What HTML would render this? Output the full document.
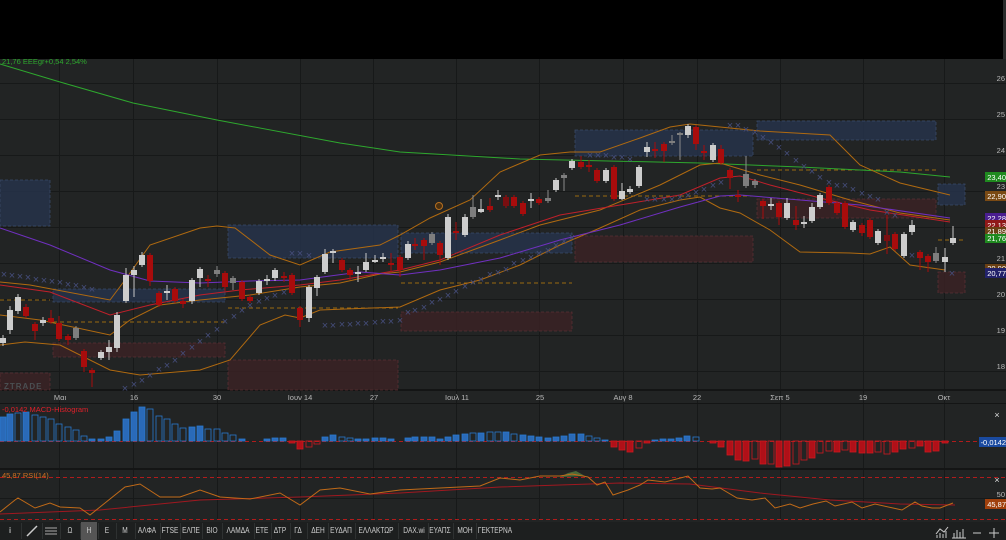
<!DOCTYPE html>
<html><head><meta charset="utf-8"><style>
body{margin:0;width:1006px;height:540px;overflow:hidden;background:#222424;font-family:"Liberation Sans",sans-serif}
svg{position:absolute;left:0;top:0}
.tb{position:absolute;top:522px;height:18px;left:0;width:1006px;background:#1d1f1f}
.tb span{position:absolute;top:4px;font-size:8px;color:#cfcfcf;transform:translateX(-50%) scaleX(.82);white-space:nowrap}
.tb i{position:absolute;top:1px;width:1px;height:16px;background:#2e3131}
</style></head><body>
<svg width="1006" height="540" viewBox="0 0 1006 540" font-family="Liberation Sans, sans-serif">
<rect x="0" y="0" width="1003" height="59" fill="#000"/>
<rect x="1003" y="0" width="3" height="59" fill="#2a2c2c"/>
<g stroke="#171919" stroke-width="1">
<line x1="0" y1="83.5" x2="1006" y2="83.5"/><line x1="0" y1="119.5" x2="1006" y2="119.5"/><line x1="0" y1="155.5" x2="1006" y2="155.5"/><line x1="0" y1="191.5" x2="1006" y2="191.5"/><line x1="0" y1="227.5" x2="1006" y2="227.5"/><line x1="0" y1="263.5" x2="1006" y2="263.5"/><line x1="0" y1="299.5" x2="1006" y2="299.5"/><line x1="0" y1="335.5" x2="1006" y2="335.5"/><line x1="0" y1="371.5" x2="1006" y2="371.5"/>
<line x1="59.5" y1="59" x2="59.5" y2="520"/><line x1="133.5" y1="59" x2="133.5" y2="520"/><line x1="217.5" y1="59" x2="217.5" y2="520"/><line x1="300.5" y1="59" x2="300.5" y2="520"/><line x1="373.5" y1="59" x2="373.5" y2="520"/><line x1="456.5" y1="59" x2="456.5" y2="520"/><line x1="539.5" y1="59" x2="539.5" y2="520"/><line x1="623.5" y1="59" x2="623.5" y2="520"/><line x1="697.5" y1="59" x2="697.5" y2="520"/><line x1="780.5" y1="59" x2="780.5" y2="520"/><line x1="863.5" y1="59" x2="863.5" y2="520"/><line x1="944.5" y1="59" x2="944.5" y2="520"/>
<line x1="0" y1="498.5" x2="1006" y2="498.5"/>
</g>
<rect x="0" y="389" width="1006" height="2" fill="#141515"/>
<rect x="0" y="403" width="1006" height="1" fill="#141515"/>
<rect x="0" y="468" width="1006" height="2" fill="#141515"/>
<g fill="#26324a" fill-opacity="0.85" stroke="#3a4a68" stroke-dasharray="3,2" stroke-width="0.8">
<rect x="0" y="180" width="50" height="46"/><rect x="53" y="289" width="172" height="13"/><rect x="228" y="225" width="170" height="33"/><rect x="401" y="233" width="171" height="20"/><rect x="575" y="130" width="178" height="26"/><rect x="757" y="121" width="179" height="19"/><rect x="938" y="184" width="27" height="21"/>
</g>
<g fill="#3a2224" fill-opacity="0.85" stroke="#5a3034" stroke-dasharray="3,2" stroke-width="0.8">
<rect x="0" y="373" width="50" height="17"/><rect x="53" y="343" width="172" height="14"/><rect x="228" y="360" width="170" height="30"/><rect x="401" y="312" width="171" height="19"/><rect x="575" y="236" width="178" height="26"/><rect x="757" y="199" width="179" height="19"/><rect x="938" y="272" width="27" height="21"/>
</g>
<g stroke="#9a6a10" stroke-dasharray="4,3" stroke-width="1">
<line x1="0" y1="300" x2="50" y2="300"/><line x1="53" y1="322" x2="225" y2="322"/><line x1="228" y1="308" x2="398" y2="308"/><line x1="401" y1="283" x2="572" y2="283"/><line x1="575" y1="196" x2="753" y2="196"/><line x1="757" y1="170" x2="936" y2="170"/><line x1="938" y1="240" x2="965" y2="240"/>
</g>
<text x="4" y="389" font-size="8" fill="#4a4f52" font-weight="bold" letter-spacing="1">ZTRADE</text>
<g fill="none" stroke-width="1">
<polyline stroke="#2ea82e" points="0,64 60,82 133,103 217,120 340,143 400,152 520,159 700,163 800,167 900,172 950,177"/>
<polyline stroke="#b06a10" points="0,282 30,285 110,300 125,280 150,245 200,228 217,226 235,228 270,255 300,265 330,252 380,245 400,235 430,218 470,200 500,172 540,155 570,152 600,152 640,138 670,127 690,124 720,127 760,131 830,135 860,165 900,183 950,195"/>
<polyline stroke="#b06a10" points="0,315 40,320 110,335 130,320 160,305 200,300 250,295 300,287 340,283 380,274 400,272 440,262 500,240 540,225 600,210 660,185 700,165 720,163 760,175 800,185 850,200 900,213 950,220"/>
<polyline stroke="#b06a10" points="0,345 25,342 60,345 110,370 140,375 200,370 230,360 260,325 285,315 300,318 320,310 400,307 440,290 480,280 520,265 560,245 600,228 640,210 680,200 700,197 720,208 740,213 770,230 800,252 850,253 870,254 890,247 910,265 945,270"/>
<polyline stroke="#c0202a" points="0,285 50,292 110,315 150,305 200,295 240,290 300,285 340,280 400,270 440,260 500,235 560,215 620,205 680,195 720,178 740,176 770,185 820,198 870,210 950,222"/>
<polyline stroke="#7030c0" points="0,228 50,245 110,270 150,281 200,283 250,281 300,280 330,276 360,272 400,275 440,270 500,258 560,240 620,225 680,207 720,196 740,195 800,200 860,205 950,218"/>
</g>
<g fill="#454d7a" font-size="11" text-anchor="middle">
<text x="4" y="278">×</text><text x="12" y="279">×</text><text x="20" y="280">×</text><text x="28" y="281">×</text><text x="36" y="283">×</text><text x="44" y="284">×</text><text x="52" y="285">×</text><text x="60" y="286">×</text><text x="68" y="288">×</text><text x="76" y="289">×</text><text x="84" y="291">×</text><text x="92" y="293">×</text>
<text x="125" y="392">×</text><text x="134" y="388">×</text><text x="142" y="384">×</text><text x="150" y="379">×</text><text x="159" y="373">×</text><text x="167" y="369">×</text><text x="175" y="364">×</text><text x="183" y="357">×</text><text x="192" y="351">×</text><text x="200" y="345">×</text><text x="208" y="339">×</text><text x="217" y="333">×</text><text x="225" y="325">×</text><text x="234" y="320">×</text><text x="242" y="314">×</text><text x="250" y="309">×</text><text x="259" y="305">×</text><text x="267" y="302">×</text><text x="275" y="299">×</text><text x="284" y="296">×</text>
<text x="292" y="257">×</text><text x="300" y="257">×</text><text x="309" y="259">×</text>
<text x="325" y="329">×</text><text x="333" y="329">×</text><text x="342" y="328">×</text><text x="350" y="328">×</text><text x="358" y="327">×</text><text x="366" y="327">×</text><text x="375" y="326">×</text><text x="383" y="325">×</text><text x="391" y="325">×</text><text x="400" y="324">×</text>
<text x="408" y="316">×</text><text x="415" y="314">×</text><text x="424" y="311">×</text><text x="432" y="306">×</text><text x="440" y="303">×</text><text x="448" y="299">×</text><text x="456" y="295">×</text><text x="465" y="290">×</text><text x="473" y="286">×</text><text x="481" y="283">×</text><text x="490" y="278">×</text><text x="498" y="276">×</text><text x="506" y="273">×</text><text x="514" y="267">×</text><text x="523" y="264">×</text><text x="531" y="261">×</text><text x="539" y="257">×</text><text x="548" y="254">×</text><text x="556" y="249">×</text><text x="564" y="245">×</text><text x="572" y="241">×</text>
<text x="590" y="159">×</text><text x="598" y="159">×</text><text x="606" y="159">×</text><text x="614" y="161">×</text><text x="622" y="161">×</text><text x="630" y="163">×</text>
<text x="647" y="203">×</text><text x="655" y="203">×</text><text x="664" y="203">×</text><text x="672" y="203">×</text><text x="680" y="201">×</text><text x="688" y="199">×</text><text x="696" y="196">×</text><text x="704" y="193">×</text><text x="713" y="189">×</text><text x="721" y="186">×</text>
<text x="730" y="129">×</text><text x="738" y="129">×</text><text x="746" y="133">×</text><text x="755" y="136">×</text><text x="763" y="141">×</text><text x="771" y="146">×</text><text x="779" y="151">×</text><text x="787" y="157">×</text><text x="796" y="164">×</text><text x="804" y="170">×</text><text x="812" y="175">×</text><text x="820" y="181">×</text><text x="829" y="186">×</text><text x="837" y="189">×</text><text x="845" y="189">×</text><text x="853" y="193">×</text><text x="862" y="197">×</text><text x="870" y="200">×</text><text x="878" y="203">×</text><text x="887" y="216">×</text><text x="895" y="219">×</text><text x="912" y="259">×</text><text x="952" y="277">×</text>
</g>
<g stroke-width="1">
<g stroke="#c8c8c8">
<line x1="3" y1="335" x2="3" y2="346"/><line x1="10" y1="306" x2="10" y2="334"/><line x1="18" y1="294" x2="18" y2="314"/><line x1="43" y1="317" x2="43" y2="326"/><line x1="101" y1="350" x2="101" y2="360"/><line x1="109" y1="340" x2="109" y2="360"/><line x1="117" y1="312" x2="117" y2="352"/><line x1="126" y1="268" x2="126" y2="303"/><line x1="134" y1="266" x2="134" y2="297"/><line x1="142" y1="252" x2="142" y2="267"/><line x1="167" y1="285" x2="167" y2="300"/><line x1="192" y1="278" x2="192" y2="304"/><line x1="200" y1="267" x2="200" y2="287"/><line x1="259" y1="279" x2="259" y2="295"/><line x1="267" y1="275" x2="267" y2="285"/><line x1="275" y1="268" x2="275" y2="281"/><line x1="309" y1="285" x2="309" y2="322"/><line x1="317" y1="275" x2="317" y2="296"/><line x1="325" y1="249" x2="325" y2="274"/><line x1="333" y1="249" x2="333" y2="263"/><line x1="358" y1="266" x2="358" y2="282"/><line x1="366" y1="253" x2="366" y2="272"/><line x1="375" y1="255" x2="375" y2="263"/><line x1="383" y1="253" x2="383" y2="262"/><line x1="408" y1="241" x2="408" y2="260"/><line x1="448" y1="214" x2="448" y2="260"/><line x1="465" y1="214" x2="465" y2="237"/><line x1="481" y1="199" x2="481" y2="213"/><line x1="498" y1="190" x2="498" y2="200"/><line x1="531" y1="193" x2="531" y2="208"/><line x1="556" y1="178" x2="556" y2="192"/><line x1="572" y1="159" x2="572" y2="170"/><line x1="606" y1="168" x2="606" y2="183"/><line x1="622" y1="183" x2="622" y2="200"/><line x1="630" y1="186" x2="630" y2="194"/><line x1="639" y1="165" x2="639" y2="188"/><line x1="647" y1="142" x2="647" y2="157"/><line x1="688" y1="124" x2="688" y2="138"/><line x1="713" y1="143" x2="713" y2="162"/><line x1="771" y1="198" x2="771" y2="210"/><line x1="787" y1="198" x2="787" y2="220"/><line x1="804" y1="216" x2="804" y2="228"/><line x1="812" y1="203" x2="812" y2="223"/><line x1="820" y1="193" x2="820" y2="209"/><line x1="853" y1="220" x2="853" y2="232"/><line x1="878" y1="229" x2="878" y2="245"/><line x1="904" y1="232" x2="904" y2="258"/><line x1="912" y1="220" x2="912" y2="235"/><line x1="945" y1="248" x2="945" y2="272"/><line x1="953" y1="226" x2="953" y2="245"/>
</g>
<g stroke="#8a8a8a">
<line x1="76" y1="326" x2="76" y2="340"/><line x1="217" y1="266" x2="217" y2="277"/><line x1="233" y1="276" x2="233" y2="290"/><line x1="432" y1="232" x2="432" y2="245"/><line x1="473" y1="195" x2="473" y2="219"/><line x1="548" y1="190" x2="548" y2="203"/><line x1="564" y1="173" x2="564" y2="191"/><line x1="672" y1="135" x2="672" y2="145"/><line x1="680" y1="132" x2="680" y2="160"/><line x1="746" y1="156" x2="746" y2="188"/><line x1="755" y1="179" x2="755" y2="188"/><line x1="936" y1="247" x2="936" y2="263"/>
</g>
<g stroke="#a80c0c">
<line x1="26" y1="304" x2="26" y2="318"/><line x1="35" y1="322" x2="35" y2="340"/><line x1="51" y1="310" x2="51" y2="324"/><line x1="59" y1="316" x2="59" y2="341"/><line x1="68" y1="334" x2="68" y2="345"/><line x1="84" y1="349" x2="84" y2="372"/><line x1="92" y1="368" x2="92" y2="387"/><line x1="150" y1="253" x2="150" y2="286"/><line x1="159" y1="291" x2="159" y2="307"/><line x1="175" y1="287" x2="175" y2="303"/><line x1="183" y1="299" x2="183" y2="308"/><line x1="208" y1="275" x2="208" y2="287"/><line x1="225" y1="271" x2="225" y2="291"/><line x1="242" y1="280" x2="242" y2="301"/><line x1="250" y1="295" x2="250" y2="303"/><line x1="284" y1="272" x2="284" y2="282"/><line x1="292" y1="273" x2="292" y2="295"/><line x1="300" y1="306" x2="300" y2="327"/><line x1="342" y1="258" x2="342" y2="272"/><line x1="350" y1="268" x2="350" y2="280"/><line x1="391" y1="253" x2="391" y2="272"/><line x1="400" y1="255" x2="400" y2="277"/><line x1="415" y1="238" x2="415" y2="250"/><line x1="424" y1="238" x2="424" y2="260"/><line x1="440" y1="241" x2="440" y2="265"/><line x1="456" y1="222" x2="456" y2="240"/><line x1="490" y1="198" x2="490" y2="212"/><line x1="506" y1="195" x2="506" y2="208"/><line x1="514" y1="195" x2="514" y2="208"/><line x1="523" y1="201" x2="523" y2="216"/><line x1="539" y1="197" x2="539" y2="205"/><line x1="581" y1="156" x2="581" y2="169"/><line x1="589" y1="160" x2="589" y2="172"/><line x1="597" y1="168" x2="597" y2="183"/><line x1="614" y1="165" x2="614" y2="201"/><line x1="655" y1="142" x2="655" y2="158"/><line x1="664" y1="142" x2="664" y2="162"/><line x1="696" y1="125" x2="696" y2="150"/><line x1="704" y1="145" x2="704" y2="160"/><line x1="721" y1="145" x2="721" y2="165"/><line x1="730" y1="168" x2="730" y2="189"/><line x1="738" y1="190" x2="738" y2="202"/><line x1="763" y1="199" x2="763" y2="219"/><line x1="779" y1="201" x2="779" y2="225"/><line x1="796" y1="206" x2="796" y2="230"/><line x1="829" y1="185" x2="829" y2="205"/><line x1="837" y1="201" x2="837" y2="215"/><line x1="845" y1="201" x2="845" y2="229"/><line x1="862" y1="223" x2="862" y2="236"/><line x1="870" y1="218" x2="870" y2="239"/><line x1="887" y1="215" x2="887" y2="254"/><line x1="895" y1="232" x2="895" y2="251"/><line x1="920" y1="250" x2="920" y2="270"/><line x1="928" y1="254" x2="928" y2="272"/>
</g>
</g>
<g fill="#cdcdcd">
<rect x="0" y="338" width="6" height="5"/><rect x="7" y="310" width="6" height="20"/><rect x="15" y="297" width="6" height="14"/><rect x="40" y="320" width="6" height="3"/><rect x="98" y="352" width="6" height="6"/><rect x="106" y="347" width="6" height="5"/><rect x="114" y="315" width="6" height="33"/><rect x="123" y="275" width="6" height="26"/><rect x="131" y="270" width="6" height="5"/><rect x="139" y="255" width="6" height="10"/><rect x="164" y="291" width="6" height="2"/><rect x="189" y="280" width="6" height="21"/><rect x="197" y="269" width="6" height="9"/><rect x="256" y="281" width="6" height="12"/><rect x="264" y="279" width="6" height="2"/><rect x="272" y="270" width="6" height="8"/><rect x="306" y="287" width="6" height="31"/><rect x="314" y="277" width="6" height="11"/><rect x="322" y="254" width="6" height="18"/><rect x="330" y="251" width="6" height="2"/><rect x="355" y="272" width="6" height="2"/><rect x="363" y="262" width="6" height="8"/><rect x="372" y="260" width="6" height="2"/><rect x="380" y="257" width="6" height="2"/><rect x="405" y="244" width="6" height="14"/><rect x="445" y="217" width="6" height="41"/><rect x="462" y="217" width="6" height="18"/><rect x="478" y="209" width="6" height="3"/><rect x="495" y="195" width="6" height="2"/><rect x="528" y="199" width="6" height="2"/><rect x="553" y="180" width="6" height="10"/><rect x="569" y="161" width="6" height="7"/><rect x="603" y="170" width="6" height="11"/><rect x="619" y="191" width="6" height="8"/><rect x="627" y="189" width="6" height="3"/><rect x="636" y="167" width="6" height="19"/><rect x="644" y="147" width="6" height="5"/><rect x="685" y="126" width="6" height="9"/><rect x="710" y="145" width="6" height="15"/><rect x="768" y="204" width="6" height="2"/><rect x="784" y="203" width="6" height="15"/><rect x="801" y="222" width="6" height="2"/><rect x="809" y="207" width="6" height="14"/><rect x="817" y="195" width="6" height="12"/><rect x="850" y="222" width="6" height="8"/><rect x="875" y="231" width="6" height="12"/><rect x="901" y="234" width="6" height="22"/><rect x="909" y="225" width="6" height="7"/><rect x="942" y="257" width="6" height="5"/><rect x="950" y="238" width="6" height="5"/>
</g>
<g fill="#7e7e7e">
<rect x="73" y="328" width="6" height="10"/><rect x="214" y="270" width="6" height="4"/><rect x="230" y="278" width="6" height="5"/><rect x="429" y="234" width="6" height="9"/><rect x="470" y="207" width="6" height="10"/><rect x="545" y="198" width="6" height="3"/><rect x="561" y="175" width="6" height="3"/><rect x="669" y="141" width="6" height="2"/><rect x="677" y="133" width="6" height="2"/><rect x="743" y="174" width="6" height="12"/><rect x="752" y="181" width="6" height="4"/><rect x="933" y="253" width="6" height="8"/>
</g>
<g fill="#a80c0c">
<rect x="23" y="307" width="6" height="9"/><rect x="32" y="324" width="6" height="7"/><rect x="48" y="318" width="6" height="4"/><rect x="56" y="323" width="6" height="16"/><rect x="65" y="336" width="6" height="4"/><rect x="81" y="351" width="6" height="16"/><rect x="89" y="370" width="6" height="3"/><rect x="147" y="255" width="6" height="26"/><rect x="156" y="293" width="6" height="12"/><rect x="172" y="289" width="6" height="12"/><rect x="180" y="301" width="6" height="3"/><rect x="205" y="279" width="6" height="2"/><rect x="222" y="273" width="6" height="14"/><rect x="239" y="282" width="6" height="17"/><rect x="247" y="297" width="6" height="4"/><rect x="281" y="276" width="6" height="2"/><rect x="289" y="275" width="6" height="18"/><rect x="297" y="308" width="6" height="12"/><rect x="339" y="260" width="6" height="10"/><rect x="347" y="270" width="6" height="5"/><rect x="388" y="263" width="6" height="2"/><rect x="397" y="257" width="6" height="13"/><rect x="412" y="244" width="6" height="2"/><rect x="421" y="240" width="6" height="6"/><rect x="437" y="243" width="6" height="12"/><rect x="453" y="231" width="6" height="2"/><rect x="487" y="206" width="6" height="4"/><rect x="503" y="197" width="6" height="9" fill="#7a0e10"/><rect x="511" y="197" width="6" height="9"/><rect x="520" y="203" width="6" height="11"/><rect x="536" y="199" width="6" height="4"/><rect x="578" y="162" width="6" height="5"/><rect x="586" y="165" width="6" height="2"/><rect x="594" y="170" width="6" height="11"/><rect x="611" y="167" width="6" height="32"/><rect x="652" y="149" width="6" height="2"/><rect x="661" y="144" width="6" height="7"/><rect x="693" y="127" width="6" height="17"/><rect x="701" y="151" width="6" height="2"/><rect x="718" y="149" width="6" height="14"/><rect x="727" y="170" width="6" height="8"/><rect x="735" y="195" width="6" height="2"/><rect x="760" y="201" width="6" height="5"/><rect x="776" y="203" width="6" height="14"/><rect x="793" y="220" width="6" height="5"/><rect x="826" y="187" width="6" height="16"/><rect x="834" y="203" width="6" height="10"/><rect x="842" y="203" width="6" height="24"/><rect x="859" y="225" width="6" height="8"/><rect x="867" y="220" width="6" height="17"/><rect x="884" y="235" width="6" height="6" fill="#7a0e10"/><rect x="892" y="234" width="6" height="15"/><rect x="917" y="252" width="6" height="6"/><rect x="925" y="256" width="6" height="6"/>
</g>
<circle cx="439" cy="206" r="3.5" fill="#4a3010" stroke="#b87020" stroke-width="1"/>
<text x="2" y="64" font-size="7.5" fill="#2ea82e">21,76 ΕΕΕgr+0,54 2,54%</text>
<g font-size="7.5" fill="#b8b8b8" text-anchor="end">
<text x="1005" y="81">26</text><text x="1005" y="117">25</text><text x="1005" y="153">24</text><text x="1005" y="189">23</text><text x="1005" y="261">21</text><text x="1005" y="297">20</text><text x="1005" y="333">19</text><text x="1005" y="369">18</text>
</g>
<g font-size="7.5" fill="#fff" text-anchor="end">
<rect x="985" y="172" width="21" height="10" fill="#1f8a1f"/><text x="1006" y="180">23,40</text>
<rect x="985" y="191" width="21" height="10" fill="#7a4a14"/><text x="1006" y="199">22,90</text>
<rect x="985" y="213" width="21" height="9" fill="#4a1e90"/><text x="1006" y="221">22,28</text>
<rect x="985" y="220" width="21" height="9" fill="#901818"/><text x="1006" y="228">22,13</text>
<rect x="985" y="227" width="21" height="8" fill="#6a4014"/><text x="1006" y="234">21,89</text>
<rect x="985" y="234" width="21" height="9" fill="#1f8a1f"/><text x="1006" y="241">21,76</text>
<rect x="985" y="264" width="21" height="8" fill="#6a4014"/><text x="1006" y="271">20,90</text>
<rect x="985" y="268" width="21" height="10" fill="#22226a"/><text x="1006" y="276">20,77</text>
</g>
<g font-size="7.5" fill="#b8b8b8" text-anchor="middle">
<text x="60" y="400">Μαι</text><text x="134" y="400">16</text><text x="217" y="400">30</text><text x="300" y="400">Ιουν 14</text><text x="374" y="400">27</text><text x="457" y="400">Ιουλ 11</text><text x="540" y="400">25</text><text x="623" y="400">Αυγ 8</text><text x="697" y="400">22</text><text x="780" y="400">Σεπ 5</text><text x="863" y="400">19</text><text x="944" y="400">Οκτ</text>
</g>
<line x1="0" y1="441.5" x2="1006" y2="441.5" stroke="#b01c1c" stroke-dasharray="4,3"/>
<g fill="#2a6ab8" stroke="#2a78d0" stroke-width="0.8">
<rect x="0" y="417" width="6" height="24"/><rect x="7" y="414" width="6" height="27"/><rect x="15" y="413" width="6" height="28" fill="none"/><rect x="23" y="412" width="6" height="29"/><rect x="32" y="415" width="6" height="26" fill="none"/><rect x="40" y="417" width="6" height="24" fill="none"/><rect x="48" y="419" width="6" height="22" fill="none"/><rect x="56" y="424" width="6" height="17" fill="none"/><rect x="65" y="427" width="6" height="14" fill="none"/><rect x="73" y="430" width="6" height="11" fill="none"/><rect x="81" y="436" width="6" height="5" fill="none"/><rect x="89" y="439" width="6" height="2"/><rect x="98" y="439" width="6" height="2"/><rect x="106" y="437" width="6" height="4"/><rect x="114" y="431" width="6" height="10"/><rect x="123" y="419" width="6" height="22"/><rect x="131" y="412" width="6" height="29"/><rect x="139" y="407" width="6" height="34"/><rect x="147" y="409" width="6" height="32" fill="none"/><rect x="156" y="416" width="6" height="25" fill="none"/><rect x="164" y="419" width="6" height="22" fill="none"/><rect x="172" y="424" width="6" height="17" fill="none"/><rect x="180" y="428" width="6" height="13" fill="none"/><rect x="189" y="427" width="6" height="14"/><rect x="197" y="426" width="6" height="15"/><rect x="205" y="429" width="6" height="12" fill="none"/><rect x="214" y="429" width="6" height="12" fill="none"/><rect x="222" y="433" width="6" height="8" fill="none"/><rect x="230" y="435" width="6" height="6" fill="none"/><rect x="239" y="439" width="6" height="2"/><rect x="264" y="439" width="6" height="2"/><rect x="272" y="438" width="6" height="3"/><rect x="280" y="438" width="6" height="3"/><rect x="322" y="437" width="6" height="4"/><rect x="330" y="435" width="6" height="6"/><rect x="339" y="437" width="6" height="4" fill="none"/><rect x="347" y="438" width="6" height="3" fill="none"/><rect x="355" y="439" width="6" height="2"/><rect x="363" y="439" width="6" height="2"/><rect x="372" y="438" width="6" height="3"/><rect x="380" y="438" width="6" height="3"/><rect x="388" y="439" width="6" height="2"/><rect x="405" y="438" width="6" height="3"/><rect x="412" y="437" width="6" height="4"/><rect x="421" y="437" width="6" height="4"/><rect x="429" y="437" width="6" height="4"/><rect x="437" y="439" width="6" height="2"/><rect x="445" y="437" width="6" height="4"/><rect x="453" y="435" width="6" height="6"/><rect x="462" y="434" width="6" height="7"/><rect x="470" y="433" width="6" height="8" fill="none"/><rect x="478" y="433" width="6" height="8"/><rect x="487" y="432" width="6" height="9" fill="none"/><rect x="495" y="432" width="6" height="9" fill="none"/><rect x="503" y="432" width="6" height="9"/><rect x="511" y="434" width="6" height="7" fill="none"/><rect x="520" y="435" width="6" height="6"/><rect x="528" y="436" width="6" height="5"/><rect x="536" y="437" width="6" height="4"/><rect x="545" y="438" width="6" height="3"/><rect x="553" y="437" width="6" height="4"/><rect x="561" y="436" width="6" height="5"/><rect x="569" y="434" width="6" height="7"/><rect x="578" y="434" width="6" height="7"/><rect x="586" y="436" width="6" height="5" fill="none"/><rect x="594" y="438" width="6" height="3" fill="none"/><rect x="602" y="440" width="6" height="1"/><rect x="652" y="440" width="6" height="1"/><rect x="660" y="439" width="6" height="2"/><rect x="668" y="439" width="6" height="2"/><rect x="676" y="438" width="6" height="3"/><rect x="684" y="436" width="6" height="5"/><rect x="693" y="437" width="6" height="4" fill="none"/>
</g>
<g fill="#b01018" stroke="#d01820" stroke-width="0.8">
<rect x="289" y="441" width="6" height="2"/><rect x="297" y="441" width="6" height="8"/><rect x="306" y="441" width="6" height="6" fill="none"/><rect x="314" y="441" width="6" height="3" fill="none"/>
<rect x="611" y="441" width="6" height="6"/><rect x="619" y="441" width="6" height="9"/><rect x="627" y="441" width="6" height="11"/><rect x="636" y="441" width="6" height="7" fill="none"/><rect x="644" y="441" width="6" height="2"/>
<rect x="710" y="441" width="6" height="2"/><rect x="718" y="441" width="6" height="6"/><rect x="727" y="441" width="6" height="14"/><rect x="735" y="441" width="6" height="19"/><rect x="743" y="441" width="6" height="20"/><rect x="752" y="441" width="6" height="18" fill="none"/><rect x="760" y="441" width="6" height="23"/><rect x="768" y="441" width="6" height="23" fill="none"/><rect x="776" y="441" width="6" height="26"/><rect x="784" y="441" width="6" height="25"/><rect x="793" y="441" width="6" height="23" fill="none"/><rect x="801" y="441" width="6" height="19" fill="none"/><rect x="809" y="441" width="6" height="17"/><rect x="817" y="441" width="6" height="12" fill="none"/><rect x="826" y="441" width="6" height="10" fill="none"/><rect x="834" y="441" width="6" height="11"/><rect x="842" y="441" width="6" height="9" fill="none"/><rect x="850" y="441" width="6" height="11"/><rect x="859" y="441" width="6" height="12"/><rect x="867" y="441" width="6" height="12"/><rect x="875" y="441" width="6" height="11" fill="none"/><rect x="884" y="441" width="6" height="13" fill="none"/><rect x="892" y="441" width="6" height="11"/><rect x="900" y="441" width="6" height="8"/><rect x="909" y="441" width="6" height="7" fill="none"/><rect x="917" y="441" width="6" height="5"/><rect x="925" y="441" width="6" height="11"/><rect x="933" y="441" width="6" height="10"/><rect x="942" y="441" width="6" height="2"/>
</g>
<text x="2" y="412" font-size="7.5" fill="#e0202a">-0,0142 MACD-Histogram</text>
<rect x="979" y="437" width="27" height="10" fill="#1a4aa0"/><text x="1006" y="445" font-size="7.5" fill="#fff" text-anchor="end">-0,0142</text>
<text x="997" y="418" font-size="9" fill="#ddd" text-anchor="middle">×</text>
<line x1="0" y1="477.5" x2="1006" y2="477.5" stroke="#b01c1c" stroke-dasharray="4,3"/>
<line x1="0" y1="519.5" x2="1006" y2="519.5" stroke="#b01c1c" stroke-dasharray="4,3"/>
<polygon points="560,477 568,473 576,471 585,476" fill="#4a6a3a"/>
<polyline fill="none" stroke="#a01820" stroke-width="1" points="0,514 100,510 200,500 300,497 400,493 500,487 560,485 620,483 690,484 760,493 830,500 900,504 955,505"/>
<polyline fill="none" stroke="#c06a18" stroke-width="1" points="0,512 15,500 18,498 35,508 50,503 60,507 80,508 90,515 100,507 125,487 140,484 160,497 180,497 200,490 220,497 250,499 280,493 300,505 320,490 340,488 370,494 400,490 440,488 480,486 500,478 520,480 540,476 560,476 572,474 588,477 597,485 605,482 613,495 628,490 640,485 648,480 665,482 688,476 700,488 712,489 720,488 737,498 752,500 765,498 775,508 790,504 800,508 813,504 826,501 835,506 852,502 862,508 875,504 893,508 902,510 915,502 922,506 932,508 940,508 953,503"/>
<text x="2" y="478" font-size="7.5" fill="#d07020">45,87 RSI(14)</text>
<text x="1005" y="497" font-size="7.5" fill="#b8b8b8" text-anchor="end">50</text>
<rect x="985" y="499" width="21" height="10" fill="#a0400c"/><text x="1006" y="507" font-size="7.5" fill="#fff" text-anchor="end">45,87</text>
<text x="997" y="483" font-size="9" fill="#ddd" text-anchor="middle">×</text>
</svg>
<div class="tb">
<div style="position:absolute;left:81px;top:0;width:16px;height:18px;background:#555"></div>
<i style="left:21px"></i><i style="left:42px"></i><i style="left:60px"></i><i style="left:80px"></i><i style="left:98px"></i><i style="left:116px"></i><i style="left:135px"></i><i style="left:160px"></i><i style="left:180px"></i><i style="left:202px"></i><i style="left:222px"></i><i style="left:254px"></i><i style="left:271px"></i><i style="left:290px"></i><i style="left:307px"></i><i style="left:328px"></i><i style="left:355px"></i><i style="left:398px"></i><i style="left:428px"></i><i style="left:453px"></i><i style="left:476px"></i>
<span style="left:10px;font-weight:bold">i</span>
<svg style="position:absolute;left:25px;top:3px" width="14" height="12"><line x1="2" y1="11" x2="12" y2="1" stroke="#ccc" stroke-width="1.5"/></svg>
<svg style="position:absolute;left:44px;top:5px" width="14" height="9"><g stroke="#aaa"><line x1="1" y1="1" x2="13" y2="1"/><line x1="1" y1="4" x2="13" y2="4"/><line x1="1" y1="7" x2="13" y2="7"/></g></svg>
<span style="left:70px">Ω</span><span style="left:89px">Η</span><span style="left:107px">Ε</span><span style="left:125px">Μ</span><span style="left:147px">ΑΛΦΑ</span><span style="left:170px">FTSE</span><span style="left:191px">ΕΛΠΕ</span><span style="left:212px">ΒΙΟ</span><span style="left:238px">ΛΑΜΔΑ</span><span style="left:262px">ΕΤΕ</span><span style="left:280px">ΔΤΡ</span><span style="left:298px">ΓΔ</span><span style="left:318px">ΔΕΗ</span><span style="left:341px">ΕΥΔΑΠ</span><span style="left:376px">ΕΛΛΑΚΤΩΡ</span><span style="left:414px">DAX.wi</span><span style="left:440px">ΕΥΑΠΣ</span><span style="left:465px">ΜΟΗ</span><span style="left:495px">ΓΕΚΤΕΡΝΑ</span>
<svg style="position:absolute;left:935px;top:3px" width="70" height="14"><g stroke="#ccc" fill="none"><polyline points="1,9 5,4 9,7 13,2"/><line x1="2" y1="13" x2="2" y2="10"/><line x1="5" y1="13" x2="5" y2="8"/><line x1="8" y1="13" x2="8" y2="9"/><line x1="11" y1="13" x2="11" y2="6"/><line x1="19" y1="13" x2="19" y2="8"/><line x1="22" y1="13" x2="22" y2="5"/><line x1="25" y1="13" x2="25" y2="7"/><line x1="28" y1="13" x2="28" y2="4"/><line x1="17" y1="13" x2="31" y2="13"/><line x1="38" y1="8" x2="46" y2="8"/><line x1="54" y1="8" x2="64" y2="8"/><line x1="59" y1="3" x2="59" y2="13"/></g></svg>
</div>
</body></html>
